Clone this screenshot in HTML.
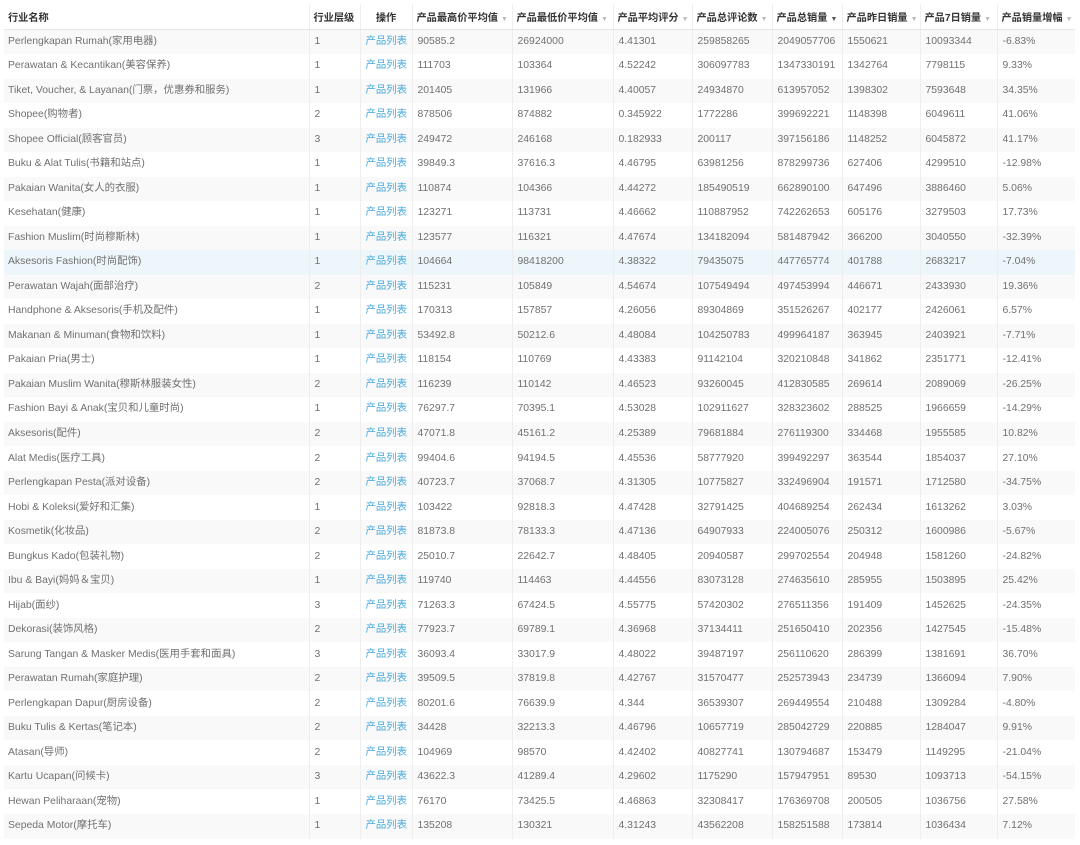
<!DOCTYPE html><html><head><meta charset="utf-8"><style>
body{margin:0;background:#fff;width:1080px;height:845px;overflow:hidden;font-family:"Liberation Sans","Noto Sans CJK SC",sans-serif;}
table{position:absolute;left:4px;top:4px;border-collapse:collapse;table-layout:fixed;width:1071px;font-size:10.4px;color:#707070;}
th{height:25px;padding:0 0 0 4px;text-align:left;color:#333;font-weight:bold;font-size:10.2px;border-bottom:1px solid #e6e6e6;border-left:1px solid #eee;white-space:nowrap;overflow:hidden;}
td{height:24.53px;line-height:14px;vertical-align:middle;padding:0 0 0 5px;border-left:1px solid #eee;white-space:nowrap;overflow:hidden;box-sizing:border-box;}
td:first-child{padding-left:4px;}
th:first-child,td:first-child{border-left:none;}
tr:nth-child(odd) td{background:#f9f9f9;}
tr.h td{background:#edf7fb!important;}
td:nth-child(3){color:#46a9dc;}
th:nth-child(3){text-align:center;padding:0;}
.s{color:#bbb;font-size:7px;font-weight:normal;margin-left:3px;}
.d{color:#555;font-size:7px;margin-left:3px;}
</style></head><body>
<table>
<colgroup><col style="width:305px"><col style="width:51px"><col style="width:52px"><col style="width:100px"><col style="width:101px"><col style="width:79px"><col style="width:80px"><col style="width:70px"><col style="width:78px"><col style="width:77px"><col style="width:78px"></colgroup>
<thead><tr><th>行业名称</th><th>行业层级</th><th>操作</th><th>产品最高价平均值<span class="s">▼</span></th><th>产品最低价平均值<span class="s">▼</span></th><th>产品平均评分<span class="s">▼</span></th><th>产品总评论数<span class="s">▼</span></th><th>产品总销量<span class="d">▼</span></th><th>产品昨日销量<span class="s">▼</span></th><th>产品7日销量<span class="s">▼</span></th><th>产品销量增幅<span class="s">▼</span></th></tr></thead>
<tbody>
<tr><td>Perlengkapan Rumah(家用电器)</td><td>1</td><td>产品列表</td><td>90585.2</td><td>26924000</td><td>4.41301</td><td>259858265</td><td>2049057706</td><td>1550621</td><td>10093344</td><td>-6.83%</td></tr>
<tr><td>Perawatan &amp; Kecantikan(美容保养)</td><td>1</td><td>产品列表</td><td>111703</td><td>103364</td><td>4.52242</td><td>306097783</td><td>1347330191</td><td>1342764</td><td>7798115</td><td>9.33%</td></tr>
<tr><td>Tiket, Voucher, &amp; Layanan(门票，优惠券和服务)</td><td>1</td><td>产品列表</td><td>201405</td><td>131966</td><td>4.40057</td><td>24934870</td><td>613957052</td><td>1398302</td><td>7593648</td><td>34.35%</td></tr>
<tr><td>Shopee(购物者)</td><td>2</td><td>产品列表</td><td>878506</td><td>874882</td><td>0.345922</td><td>1772286</td><td>399692221</td><td>1148398</td><td>6049611</td><td>41.06%</td></tr>
<tr><td>Shopee Official(顾客官员)</td><td>3</td><td>产品列表</td><td>249472</td><td>246168</td><td>0.182933</td><td>200117</td><td>397156186</td><td>1148252</td><td>6045872</td><td>41.17%</td></tr>
<tr><td>Buku &amp; Alat Tulis(书籍和站点)</td><td>1</td><td>产品列表</td><td>39849.3</td><td>37616.3</td><td>4.46795</td><td>63981256</td><td>878299736</td><td>627406</td><td>4299510</td><td>-12.98%</td></tr>
<tr><td>Pakaian Wanita(女人的衣服)</td><td>1</td><td>产品列表</td><td>110874</td><td>104366</td><td>4.44272</td><td>185490519</td><td>662890100</td><td>647496</td><td>3886460</td><td>5.06%</td></tr>
<tr><td>Kesehatan(健康)</td><td>1</td><td>产品列表</td><td>123271</td><td>113731</td><td>4.46662</td><td>110887952</td><td>742262653</td><td>605176</td><td>3279503</td><td>17.73%</td></tr>
<tr><td>Fashion Muslim(时尚穆斯林)</td><td>1</td><td>产品列表</td><td>123577</td><td>116321</td><td>4.47674</td><td>134182094</td><td>581487942</td><td>366200</td><td>3040550</td><td>-32.39%</td></tr>
<tr class="h"><td>Aksesoris Fashion(时尚配饰)</td><td>1</td><td>产品列表</td><td>104664</td><td>98418200</td><td>4.38322</td><td>79435075</td><td>447765774</td><td>401788</td><td>2683217</td><td>-7.04%</td></tr>
<tr><td>Perawatan Wajah(面部治疗)</td><td>2</td><td>产品列表</td><td>115231</td><td>105849</td><td>4.54674</td><td>107549494</td><td>497453994</td><td>446671</td><td>2433930</td><td>19.36%</td></tr>
<tr><td>Handphone &amp; Aksesoris(手机及配件)</td><td>1</td><td>产品列表</td><td>170313</td><td>157857</td><td>4.26056</td><td>89304869</td><td>351526267</td><td>402177</td><td>2426061</td><td>6.57%</td></tr>
<tr><td>Makanan &amp; Minuman(食物和饮料)</td><td>1</td><td>产品列表</td><td>53492.8</td><td>50212.6</td><td>4.48084</td><td>104250783</td><td>499964187</td><td>363945</td><td>2403921</td><td>-7.71%</td></tr>
<tr><td>Pakaian Pria(男士)</td><td>1</td><td>产品列表</td><td>118154</td><td>110769</td><td>4.43383</td><td>91142104</td><td>320210848</td><td>341862</td><td>2351771</td><td>-12.41%</td></tr>
<tr><td>Pakaian Muslim Wanita(穆斯林服装女性)</td><td>2</td><td>产品列表</td><td>116239</td><td>110142</td><td>4.46523</td><td>93260045</td><td>412830585</td><td>269614</td><td>2089069</td><td>-26.25%</td></tr>
<tr><td>Fashion Bayi &amp; Anak(宝贝和儿童时尚)</td><td>1</td><td>产品列表</td><td>76297.7</td><td>70395.1</td><td>4.53028</td><td>102911627</td><td>328323602</td><td>288525</td><td>1966659</td><td>-14.29%</td></tr>
<tr><td>Aksesoris(配件)</td><td>2</td><td>产品列表</td><td>47071.8</td><td>45161.2</td><td>4.25389</td><td>79681884</td><td>276119300</td><td>334468</td><td>1955585</td><td>10.82%</td></tr>
<tr><td>Alat Medis(医疗工具)</td><td>2</td><td>产品列表</td><td>99404.6</td><td>94194.5</td><td>4.45536</td><td>58777920</td><td>399492297</td><td>363544</td><td>1854037</td><td>27.10%</td></tr>
<tr><td>Perlengkapan Pesta(派对设备)</td><td>2</td><td>产品列表</td><td>40723.7</td><td>37068.7</td><td>4.31305</td><td>10775827</td><td>332496904</td><td>191571</td><td>1712580</td><td>-34.75%</td></tr>
<tr><td>Hobi &amp; Koleksi(爱好和汇集)</td><td>1</td><td>产品列表</td><td>103422</td><td>92818.3</td><td>4.47428</td><td>32791425</td><td>404689254</td><td>262434</td><td>1613262</td><td>3.03%</td></tr>
<tr><td>Kosmetik(化妆品)</td><td>2</td><td>产品列表</td><td>81873.8</td><td>78133.3</td><td>4.47136</td><td>64907933</td><td>224005076</td><td>250312</td><td>1600986</td><td>-5.67%</td></tr>
<tr><td>Bungkus Kado(包装礼物)</td><td>2</td><td>产品列表</td><td>25010.7</td><td>22642.7</td><td>4.48405</td><td>20940587</td><td>299702554</td><td>204948</td><td>1581260</td><td>-24.82%</td></tr>
<tr><td>Ibu &amp; Bayi(妈妈＆宝贝)</td><td>1</td><td>产品列表</td><td>119740</td><td>114463</td><td>4.44556</td><td>83073128</td><td>274635610</td><td>285955</td><td>1503895</td><td>25.42%</td></tr>
<tr><td>Hijab(面纱)</td><td>3</td><td>产品列表</td><td>71263.3</td><td>67424.5</td><td>4.55775</td><td>57420302</td><td>276511356</td><td>191409</td><td>1452625</td><td>-24.35%</td></tr>
<tr><td>Dekorasi(装饰风格)</td><td>2</td><td>产品列表</td><td>77923.7</td><td>69789.1</td><td>4.36968</td><td>37134411</td><td>251650410</td><td>202356</td><td>1427545</td><td>-15.48%</td></tr>
<tr><td>Sarung Tangan &amp; Masker Medis(医用手套和面具)</td><td>3</td><td>产品列表</td><td>36093.4</td><td>33017.9</td><td>4.48022</td><td>39487197</td><td>256110620</td><td>286399</td><td>1381691</td><td>36.70%</td></tr>
<tr><td>Perawatan Rumah(家庭护理)</td><td>2</td><td>产品列表</td><td>39509.5</td><td>37819.8</td><td>4.42767</td><td>31570477</td><td>252573943</td><td>234739</td><td>1366094</td><td>7.90%</td></tr>
<tr><td>Perlengkapan Dapur(厨房设备)</td><td>2</td><td>产品列表</td><td>80201.6</td><td>76639.9</td><td>4.344</td><td>36539307</td><td>269449554</td><td>210488</td><td>1309284</td><td>-4.80%</td></tr>
<tr><td>Buku Tulis &amp; Kertas(笔记本)</td><td>2</td><td>产品列表</td><td>34428</td><td>32213.3</td><td>4.46796</td><td>10657719</td><td>285042729</td><td>220885</td><td>1284047</td><td>9.91%</td></tr>
<tr><td>Atasan(导师)</td><td>2</td><td>产品列表</td><td>104969</td><td>98570</td><td>4.42402</td><td>40827741</td><td>130794687</td><td>153479</td><td>1149295</td><td>-21.04%</td></tr>
<tr><td>Kartu Ucapan(问候卡)</td><td>3</td><td>产品列表</td><td>43622.3</td><td>41289.4</td><td>4.29602</td><td>1175290</td><td>157947951</td><td>89530</td><td>1093713</td><td>-54.15%</td></tr>
<tr><td>Hewan Peliharaan(宠物)</td><td>1</td><td>产品列表</td><td>76170</td><td>73425.5</td><td>4.46863</td><td>32308417</td><td>176369708</td><td>200505</td><td>1036756</td><td>27.58%</td></tr>
<tr><td>Sepeda Motor(摩托车)</td><td>1</td><td>产品列表</td><td>135208</td><td>130321</td><td>4.31243</td><td>43562208</td><td>158251588</td><td>173814</td><td>1036434</td><td>7.12%</td></tr>
</tbody></table>
</body></html>
